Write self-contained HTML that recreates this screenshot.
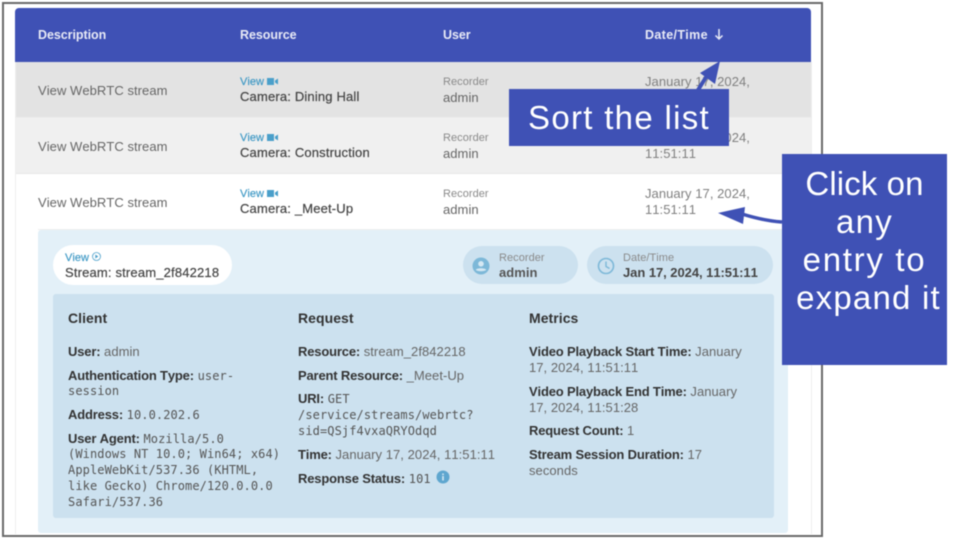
<!DOCTYPE html>
<html><head><meta charset="utf-8">
<style>
html,body{margin:0;padding:0;background:#fff;}
body{width:960px;height:540px;position:relative;overflow:hidden;font-family:"Liberation Sans",sans-serif;}
#w{position:absolute;left:0;top:0;width:960px;height:540px;filter:blur(.4px);}
.b{position:absolute;}
.t{position:absolute;white-space:nowrap;font-size:13px;line-height:16px;color:#666;letter-spacing:.05px;font-kerning:none;margin-top:1px;}
.t b{color:#333;letter-spacing:-.17px;}
.t.m,.t.k{margin-top:0;}
.d{color:#333;font-weight:700;}
.h{color:#e8eaf6;font-weight:700;font-size:12.500px;letter-spacing:-.05px;}
.v{color:#3b97c4;font-size:11px;letter-spacing:.05px;-webkit-text-stroke:.15px #3b97c4;}
.g{color:#8a8a8a;font-size:11px;letter-spacing:.05px;}
.n{color:#444;-webkit-text-stroke:.2px #444;letter-spacing:.17px;}
.m{font-family:"DejaVu Sans Mono",monospace;font-size:12px;letter-spacing:.09px;color:#555;}
.c{color:#fff;font-size:33px;line-height:38px;text-align:center;position:absolute;white-space:nowrap;}
</style></head><body><div id="w">
<div class="b" style="left:2px;top:2px;width:817px;height:531px;border:2px solid #6a6a6a;"></div>
<div class="b" style="left:15px;top:8px;width:796px;height:54px;background:#3f51b5;border-radius:4px 4px 0 0;"></div>
<div class="b" style="left:15px;top:62px;width:796px;height:55px;background:#e3e3e3;"></div>
<div class="b" style="left:15px;top:118px;width:796px;height:55px;background:#f0f0f0;"></div>
<div class="b" style="left:15px;top:117px;width:796px;height:1px;background:#ececec;"></div>
<div class="b" style="left:15px;top:173px;width:796px;height:1px;background:#e8e8e8;"></div>
<div class="b" style="left:15px;top:62px;width:1px;height:472px;background:#eee;"></div>
<div class="b" style="left:811px;top:62px;width:1px;height:472px;background:#eee;"></div>

<span class="t h" style="left:38px;top:26px;">Description</span>
<span class="t h" style="left:240px;top:26px;">Resource</span>
<span class="t h" style="left:443px;top:26px;">User</span>
<span class="t h" style="left:645px;top:26px;letter-spacing:.35px;">Date/Time</span>
<svg class="b" style="left:713px;top:28px" width="12" height="13" viewBox="0 0 12 13"><path d="M6 1V11M2.500 7.500L6 11L9.500 7.500" fill="none" stroke="#e8eaf6" stroke-width="1.500"/></svg>

<span class="t" style="left:38px;top:82px;">View WebRTC stream</span>
<span class="t" style="left:38px;top:138px;">View WebRTC stream</span>
<span class="t" style="left:38px;top:194px;">View WebRTC stream</span>

<span class="t v k" style="left:240px;top:74px;">View</span>
<span class="t v k" style="left:240px;top:130px;">View</span>
<span class="t v k" style="left:240px;top:186px;">View</span>
<svg class="b" style="left:267px;top:77px" width="12" height="9" viewBox="0 0 12 9"><path d="M0 1H7V8H0ZM8 3.500L11 1.500V7.500L8 5.500Z" fill="#4a9fca"/></svg>
<svg class="b" style="left:267px;top:133px" width="12" height="9" viewBox="0 0 12 9"><path d="M0 1H7V8H0ZM8 3.500L11 1.500V7.500L8 5.500Z" fill="#4a9fca"/></svg>
<svg class="b" style="left:267px;top:189px" width="12" height="9" viewBox="0 0 12 9"><path d="M0 1H7V8H0ZM8 3.500L11 1.500V7.500L8 5.500Z" fill="#4a9fca"/></svg>
<span class="t n" style="left:240px;top:88px;">Camera: Dining Hall</span>
<span class="t n" style="left:240px;top:144px;">Camera: Construction</span>
<span class="t n" style="left:240px;top:200px;">Camera: _Meet-Up</span>

<span class="t g" style="left:443px;top:73px;">Recorder</span>
<span class="t" style="left:443px;top:89px;">admin</span>
<span class="t g" style="left:443px;top:129px;">Recorder</span>
<span class="t" style="left:443px;top:145px;">admin</span>
<span class="t g" style="left:443px;top:185px;">Recorder</span>
<span class="t" style="left:443px;top:201px;">admin</span>

<span class="t" style="left:645px;top:73px;color:#808080;">January 17, 2024,</span>
<span class="t" style="left:645px;top:129px;color:#808080;">January 17, 2024,</span>
<span class="t" style="left:645px;top:145px;color:#808080;">11:51:11</span>
<span class="t" style="left:645px;top:185px;color:#808080;">January 17, 2024,</span>
<span class="t" style="left:645px;top:201px;color:#808080;">11:51:11</span>

<div class="b" style="left:38px;top:229px;width:750px;height:1px;background:#eee;"></div>
<div class="b" style="left:38px;top:230px;width:750px;height:303px;background:#e3f0f8;border-radius:3px;"></div>
<div class="b" style="left:53px;top:245px;width:179px;height:40px;background:#fff;border-radius:20px;"></div>
<span class="t v" style="left:65px;top:249px;">View</span>
<svg class="b" style="left:91px;top:251px" width="11" height="11" viewBox="0 0 11 11"><circle cx="5.500" cy="5.500" r="4" fill="none" stroke="#4a9fca" stroke-width=".8"/><path d="M4.300 3.500L7.300 5.500L4.300 7.500Z" fill="#4a9fca"/></svg>
<span class="t n" style="left:65px;top:264px;">Stream: stream_2f842218</span>

<div class="b" style="left:463px;top:246px;width:115px;height:38px;background:#cce1ef;border-radius:19px;"></div>
<svg class="b" style="left:472px;top:257px" width="18" height="18" viewBox="0 0 18 18"><circle cx="9" cy="9" r="8.500" fill="#7db8d8"/><circle cx="9" cy="6.800" r="2.800" fill="#d5e8f3"/><path d="M3.800 12.800C5 10.800 13 10.800 14.200 12.800C13 14.800 5 14.800 3.800 12.800Z" fill="#d5e8f3"/></svg>
<span class="t g" style="left:499px;top:249px;">Recorder</span>
<span class="t d" style="left:499px;top:264px;color:#555;">admin</span>
<div class="b" style="left:587px;top:246px;width:186px;height:38px;background:#cce1ef;border-radius:19px;"></div>
<svg class="b" style="left:597px;top:257px" width="18" height="18" viewBox="0 0 18 18"><circle cx="9" cy="9" r="7.500" fill="none" stroke="#7db8d8" stroke-width="1.600"/><path d="M9 4.500V9.500L12.500 11.500" fill="none" stroke="#7db8d8" stroke-width="1.400"/></svg>
<span class="t g" style="left:623px;top:249px;">Date/Time</span>
<span class="t d" style="left:623px;top:264px;color:#444;letter-spacing:-.05px;">Jan 17, 2024, 11:51:11</span>

<div class="b" style="left:53px;top:294px;width:721px;height:224px;background:#cce1ef;border-radius:3px;"></div>
<span class="t d k" style="left:68px;top:310px;font-size:14px;">Client</span>
<span class="t d k" style="left:298px;top:310px;font-size:14px;">Request</span>
<span class="t d k" style="left:529px;top:310px;font-size:14px;">Metrics</span>

<span class="t" style="left:68px;top:343px;"><b>User:</b> admin</span>
<span class="t" style="left:68px;top:367px;"><b>Authentication Type:</b> <span class="m">user-</span></span>
<span class="t m" style="left:68px;top:383px;">session</span>
<span class="t" style="left:68px;top:406px;"><b>Address:</b> <span class="m">10.0.202.6</span></span>
<span class="t" style="left:68px;top:430px;"><b>User Agent:</b> <span class="m">Mozilla/5.0</span></span>
<span class="t m" style="left:68px;top:446px;">(Windows NT 10.0; Win64; x64)</span>
<span class="t m" style="left:68px;top:462px;">AppleWebKit/537.36 (KHTML,</span>
<span class="t m" style="left:68px;top:478px;">like Gecko) Chrome/120.0.0.0</span>
<span class="t m" style="left:68px;top:494px;">Safari/537.36</span>

<span class="t" style="left:298px;top:343px;"><b>Resource:</b> stream_2f842218</span>
<span class="t" style="left:298px;top:367px;"><b>Parent Resource:</b> _Meet-Up</span>
<span class="t" style="left:298px;top:390px;"><b>URI:</b> <span class="m">GET</span></span>
<span class="t m" style="left:298px;top:407px;">/service/streams/webrtc?</span>
<span class="t m" style="left:298px;top:423px;">sid=QSjf4vxaQRYOdqd</span>
<span class="t" style="left:298px;top:446px;"><b>Time:</b> January 17, 2024, 11:51:11</span>
<span class="t" style="left:298px;top:470px;"><b>Response Status:</b> <span class="m">101</span></span>
<svg class="b" style="left:436px;top:470px" width="14" height="14" viewBox="0 0 14 14"><circle cx="7" cy="7" r="6.500" fill="#5ea6cf"/><rect x="6.200" y="6" width="1.600" height="4.500" fill="#d5e8f3"/><rect x="6.200" y="3.500" width="1.600" height="1.600" fill="#d5e8f3"/></svg>

<span class="t" style="left:529px;top:343px;"><b>Video Playback Start Time:</b> January</span>
<span class="t" style="left:529px;top:359px;">17, 2024, 11:51:11</span>
<span class="t" style="left:529px;top:383px;"><b>Video Playback End Time:</b> January</span>
<span class="t" style="left:529px;top:399px;">17, 2024, 11:51:28</span>
<span class="t" style="left:529px;top:422px;"><b>Request Count:</b> 1</span>
<span class="t" style="left:529px;top:446px;"><b>Stream Session Duration:</b> 17</span>
<span class="t" style="left:529px;top:462px;">seconds</span>

<svg class="b" style="left:0;top:0" width="960" height="540" viewBox="0 0 960 540">
<path d="M698 90L708 74" stroke="#3f51b5" stroke-width="4" fill="none"/>
<path d="M720 61L700 73L715 84Z" fill="#3f51b5"/>
<path d="M782 222C768 221 755 218 742 214" stroke="#3f51b5" stroke-width="3.500" fill="none"/>
<path d="M718 213L745 207L743 224Z" fill="#3f51b5"/>
</svg>

<div class="b" style="left:509px;top:89px;width:220px;height:57px;background:#3f51b5;"></div>
<span class="c" style="left:509px;top:99px;width:220px;letter-spacing:1.300px;">Sort the list</span>
<div class="b" style="left:782px;top:154px;width:165px;height:211px;background:#3f51b5;"></div>
<span class="c" style="left:782px;top:165px;width:165px;letter-spacing:.1px;">Click on</span>
<span class="c" style="left:782px;top:203px;width:165px;letter-spacing:1.300px;">any</span>
<span class="c" style="left:782px;top:241px;width:165px;letter-spacing:1.700px;">entry to</span>
<span class="c" style="left:786px;top:279px;width:165px;letter-spacing:1.200px;">expand it</span>
</div></body></html>
